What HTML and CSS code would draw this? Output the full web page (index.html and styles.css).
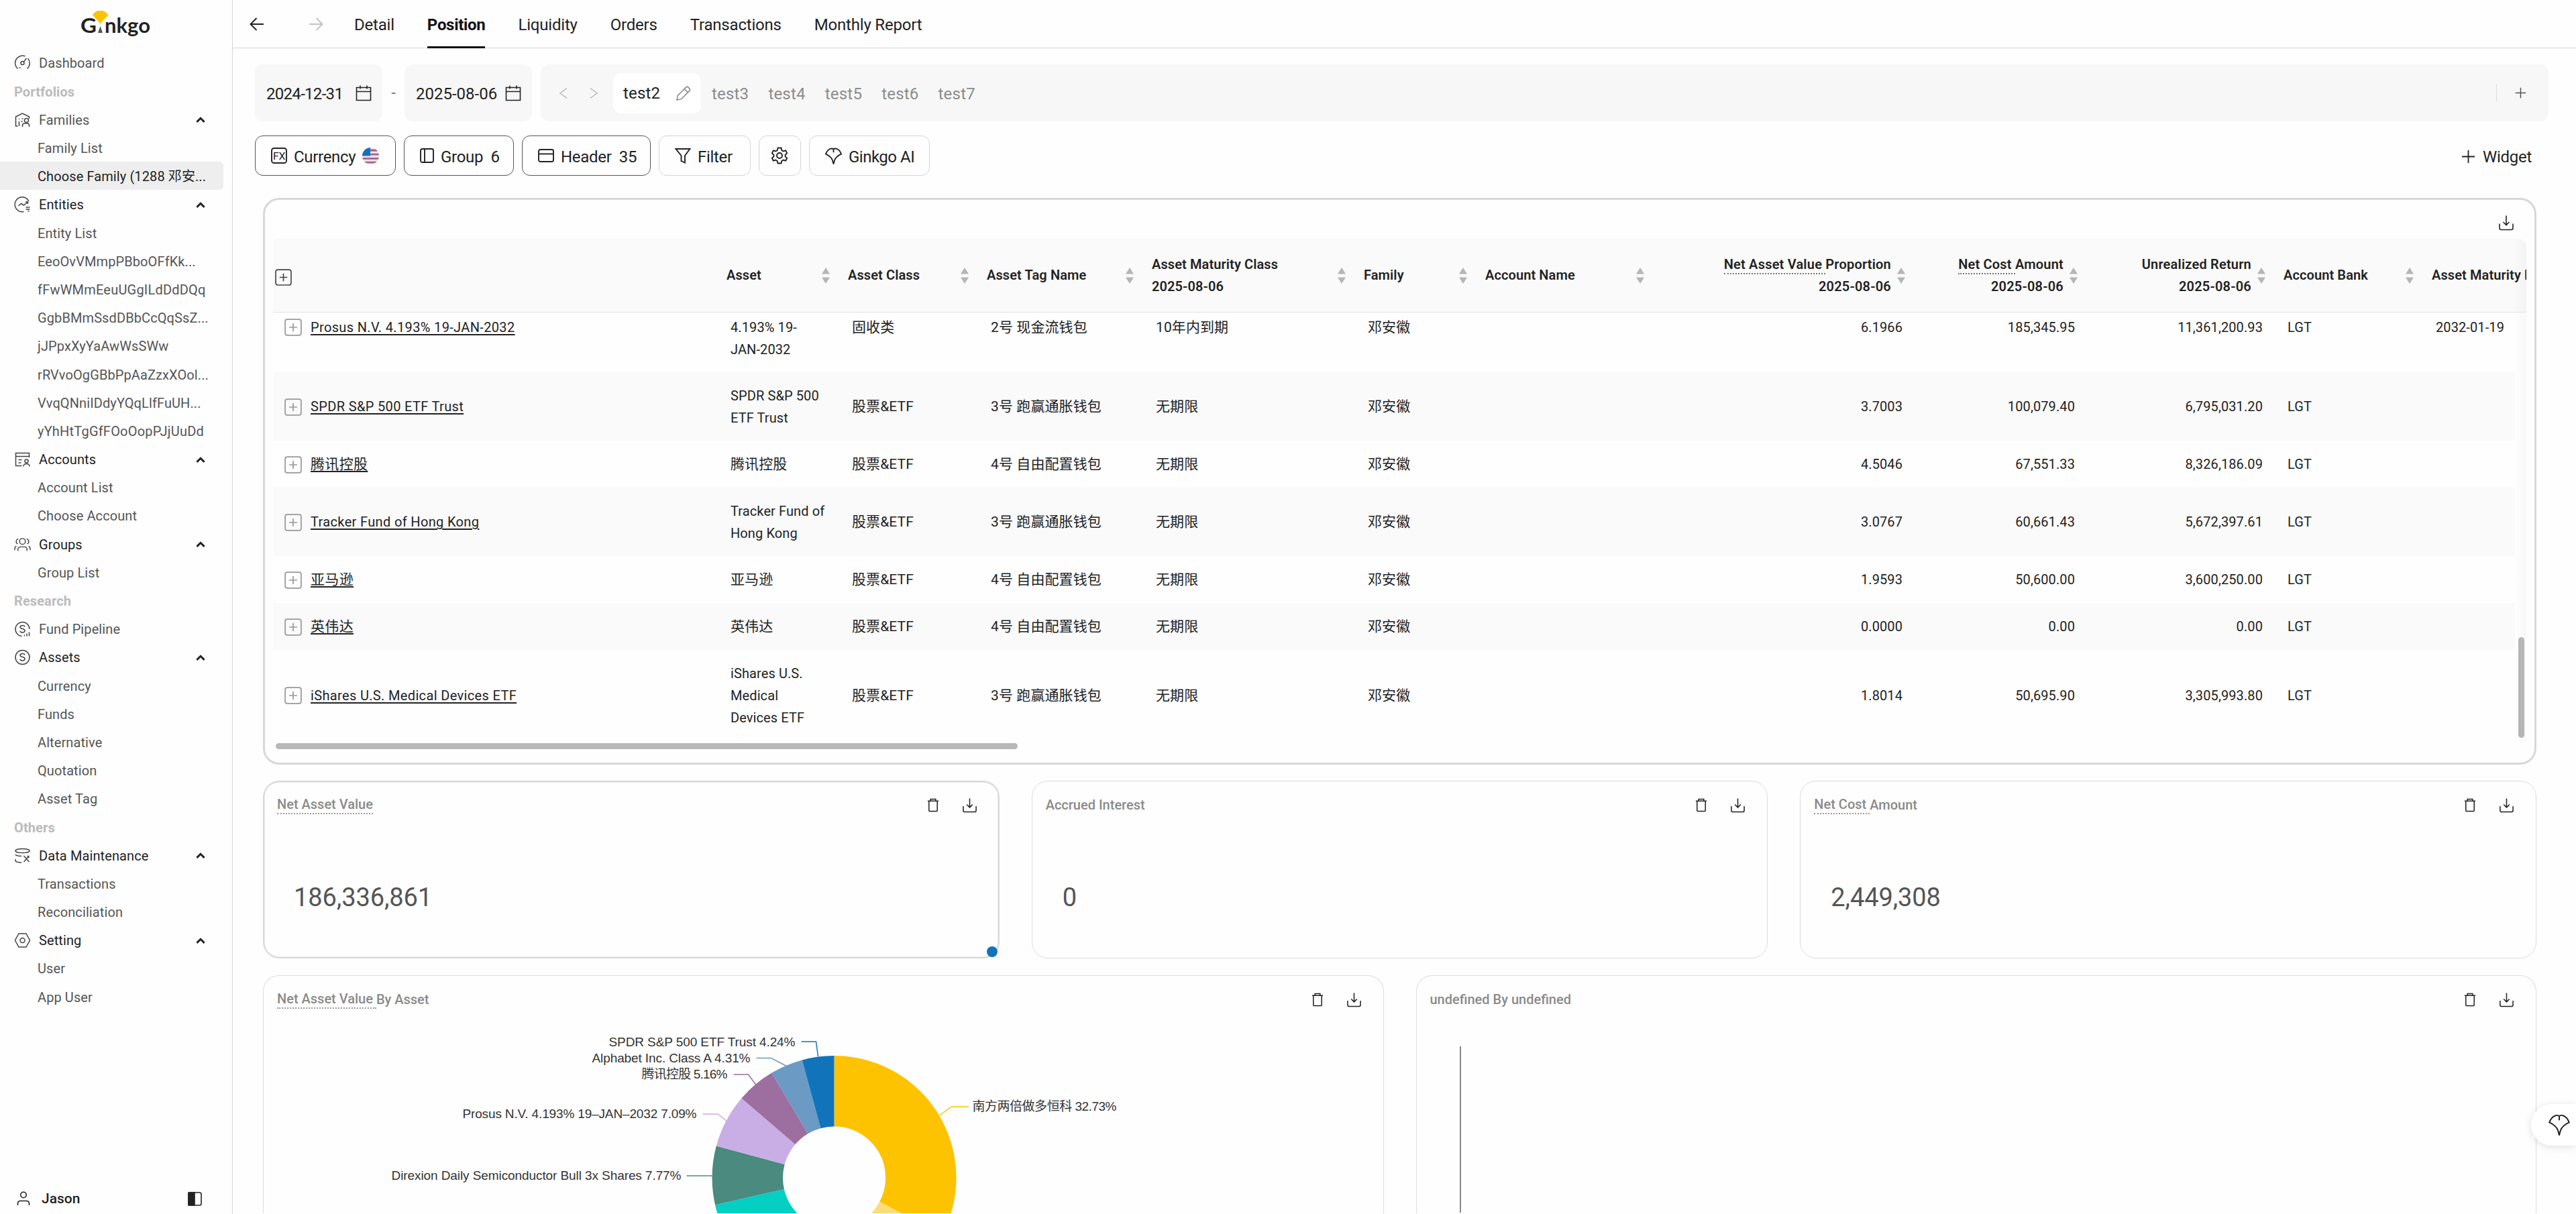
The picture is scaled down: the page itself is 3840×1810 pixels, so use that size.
FILE: index.html
```
<!DOCTYPE html>
<html lang="en">
<head>
    <meta charset="UTF-8">
    <title>Ginkgo - Position</title>
    <link rel="stylesheet" href="styles.css">
</head>
<body>

<!-- icons -->
<svg class="sprite">
    <symbol id="i-plusbox" viewBox="0 0 24 24"><rect x="1" y="1" width="22" height="22" rx="3"/><path d="M12 6.500v11M6.500 12h11"/></symbol>
    <symbol id="i-up" viewBox="0 0 12 8"><path d="M1 7l5-5 5 5" stroke-width="2.600"/></symbol>
    <symbol id="i-sort" viewBox="0 0 12 28"><path d="M6 2l6 9.500h-12zM6 26l6-9.500h-12z" stroke="none" fill="#b5b5b5"/></symbol>
    <symbol id="i-down" viewBox="0 0 24 24"><path d="M12 1.500v14M7.500 11l4.500 4.500 4.500-4.500M2 13.500v6.500q0 2.500 2.500 2.500h15q2.500 0 2.500-2.500v-6.500"/></symbol>
    <symbol id="i-trash" viewBox="0 0 20 22"><path d="M1.500 4.500h17M6 4V1.500h8V4M3.500 4.500v14.500q0 1.500 1.500 1.500h10q1.500 0 1.500-1.500V4.500"/></symbol>
    <symbol id="i-cal" viewBox="0 0 24 24"><path d="M1.500 3.500h21v19h-21zM1.500 9.500h21M7 .5v5M17 .5v5"/></symbol>
    <symbol id="i-leaf" viewBox="0 0 26 26"><path d="M13 25.500l-1.500-5.500Q9.500 14 1 10 3.500 3.500 8.500 1.800q2.500-.8 4.500.7v5-5q2-1.500 4.500-.7Q22.500 3.500 25 10q-8.500 4-10.500 10z"/></symbol>
    <symbol id="i-plus" viewBox="0 0 22 22"><path d="M11 1v20M1 11h20"/></symbol>
</svg>

<div class="layout">
    <div class="sidebar">
        <div class="logo">
            <svg width="104" height="46" viewBox="0 0 104 46">
                <path d="M29.500 22 18 9.500Q21 4 28 2.500L29.500 4 31 2.500Q38 4 41.500 9.500L31 20v3z" fill="#fec300" stroke="none"/>
                <path d="M29.500 26l3.500 10h-7z" fill="#555" stroke="none"/>
                <text x="0" y="36" textLength="24" lengthAdjust="spacingAndGlyphs">G</text>
                <text x="36" y="36" textLength="68" lengthAdjust="spacingAndGlyphs">nkgo</text>
            </svg>
        </div>
        <div class="item">
            <svg class="ico" viewBox="0 0 24 24"><path d="M5 20.500A11 11 0 0 1 16 1.800M20 5a11 11 0 0 1-1 15.500M13.500 10.500L18 5"/><circle cx="12" cy="12" r="2.500"/><path d="M7 19h2"/></svg>
            <span>Dashboard</span>
        </div>
        <div class="caption">Portfolios</div>
        <div class="item">
            <svg class="ico" viewBox="0 0 24 24"><path d="M5 21H2V7l10-5 10 5v3M7 21v-7M7 11v-1M11 10h2M10 14h2"/><circle cx="18" cy="12.500" r="3"/><path d="M12 22v-2q0-3 3-3h4q3 0 3 3v2"/></svg>
            <span>Families</span><svg class="up"><use href="#i-up"/></svg>
        </div>
        <div class="sub">Family List</div>
        <div class="sub active">Choose Family (1288 邓安...</div>
        <div class="item dark">
            <svg class="ico" viewBox="0 0 24 24"><path d="M21.500 7A11 11 0 1 0 14 22.500M6 14l4-3.500 4 2.500 6-5M16.500 8H20v3M17 16h6M17 19h6M20 21l2 1.500"/></svg>
            <span>Entities</span><svg class="up"><use href="#i-up"/></svg>
        </div>
        <div class="sub">Entity List</div>
        <div class="sub">EeoOvVMmpPBboOFfKk...</div>
        <div class="sub wide">fFwWMmEeuUGgILdDdDQq</div>
        <div class="sub">GgbBMmSsdDBbCcQqSsZ...</div>
        <div class="sub">jJPpxXyYaAwWsSWw</div>
        <div class="sub">rRVvoOgGBbPpAaZzxXOol...</div>
        <div class="sub">VvqQNniIDdyYQqLlfFuUH...</div>
        <div class="sub wide">yYhHtTgGfFOoOopPJjUuDd</div>
        <div class="item dark">
            <svg class="ico" viewBox="0 0 24 24"><path d="M11 21.500H2v-19h20V9M2 7.500h20M6 12.500h5M6 17h4"/><circle cx="18" cy="14.500" r="2.500"/><path d="M13.500 22.500q0-4 4.500-4t4.500 4"/></svg>
            <span>Accounts</span><svg class="up"><use href="#i-up"/></svg>
        </div>
        <div class="sub">Account List</div>
        <div class="sub">Choose Account</div>
        <div class="item dark">
            <svg class="ico" viewBox="0 0 26 24"><circle cx="13" cy="7" r="4.500"/><path d="M6 21.500v-2q0-4 4-4h6q4 0 4 4v2M6.500 3q-4 1.500-3 6l2 2M19.500 3q4 1.500 3 6l-2 2M1 20.500v-2q0-3 2.500-4M25 20.500v-2q0-3-2.500-4"/></svg>
            <span>Groups</span><svg class="up"><use href="#i-up"/></svg>
        </div>
        <div class="sub">Group List</div>
        <div class="caption">Research</div>
        <div class="item">
            <svg class="ico" viewBox="0 0 24 24"><path d="M22.500 12A10.500 10.500 0 1 0 11 22.500M15 22.500v-2M18.500 22.500v-4M22 22.500v-6"/><path d="M15.500 8.500Q15 6.500 12 6.500t-3.500 2.200Q8.500 11 12 11.500t3.500 2.800Q15.500 17 12 17t-3.500-2.200"/></svg>
            <span>Fund Pipeline</span>
        </div>
        <div class="item dark">
            <svg class="ico" viewBox="0 0 24 24"><circle cx="12" cy="12" r="10.500"/><path d="M15.500 8.500Q15 6.500 12 6.500t-3.500 2.200Q8.500 11 12 11.500t3.500 2.800Q15.500 17 12 17t-3.500-2.200"/></svg>
            <span>Assets</span><svg class="up"><use href="#i-up"/></svg>
        </div>
        <div class="sub">Currency</div>
        <div class="sub">Funds</div>
        <div class="sub">Alternative</div>
        <div class="sub">Quotation</div>
        <div class="sub">Asset Tag</div>
        <div class="caption">Others</div>
        <div class="item dark">
            <svg class="ico" viewBox="0 0 24 24"><ellipse cx="12" cy="4.500" rx="10.500" ry="3"/><path d="M1.500 10q2 2.500 9 2.500M1.500 17v2.500q2 2.500 9 2.500M14 12l8 9M14 21l8-9M19 12l3 3"/></svg>
            <span>Data Maintenance</span><svg class="up"><use href="#i-up"/></svg>
        </div>
        <div class="sub">Transactions</div>
        <div class="sub">Reconciliation</div>
        <div class="item dark">
            <svg class="ico" viewBox="0 0 24 24"><path d="M6.500 2h11L23 12l-5.500 10h-11L1 12z"/><circle cx="12" cy="12" r="3.500"/></svg>
            <span>Setting</span><svg class="up"><use href="#i-up"/></svg>
        </div>
        <div class="sub">User</div>
        <div class="sub">App User</div>
        <div class="user">
            <svg width="20" height="22" viewBox="0 0 20 22"><circle cx="10" cy="5.500" r="4.200"/><path d="M1.500 21v-2.500q0-4 4-4h9q4 0 4 4V21"/></svg>
            <span>Jason</span>
            <svg class="fold" width="21" height="21" viewBox="0 0 21 21"><rect x="1" y="1" width="19" height="19" rx="2.500"/><path d="M1 1h9v19H1z" fill="#222"/></svg>
        </div>
    </div>

    <div class="main">
        <div class="topbar">
            <svg class="arrow" viewBox="0 0 24 24"><path d="M22 12H3M11.500 3L2.500 12l9 9"/></svg>
            <svg class="arrow off" viewBox="0 0 24 24"><path d="M2 12h19M12.500 3l9 9-9 9"/></svg>
            <div class="tab">Detail</div>
            <div class="tab on">Position</div>
            <div class="tab">Liquidity</div>
            <div class="tab">Orders</div>
            <div class="tab">Transactions</div>
            <div class="tab">Monthly Report</div>
        </div>

        <div class="datebar">
            <div class="date first"><span>2024-12-31</span><svg width="24" height="24"><use href="#i-cal"/></svg></div>
            <div class="dash">-</div>
            <div class="date"><span>2025-08-06</span><svg width="24" height="24"><use href="#i-cal"/></svg></div>
            <div class="views">
                <svg class="pg" viewBox="0 0 14 18"><path d="M13 1L2 9l11 8"/></svg>
                <svg class="pg" viewBox="0 0 14 18"><path d="M1 1l11 8-11 8"/></svg>
                <div class="view on">test2<svg width="23" height="23" viewBox="0 0 24 24"><path d="M2 22l1.500-7L16 2.500q2-2 4 0l1.500 1.500q2 2 0 4L9 20.500zM14 5l4.500 4.500"/></svg></div>
                <div class="view">test3</div>
                <div class="view">test4</div>
                <div class="view">test5</div>
                <div class="view">test6</div>
                <div class="view">test7</div>
                <div class="add"><svg width="17" height="17"><use href="#i-plus"/></svg></div>
            </div>
        </div>

        <div class="tools">
            <div class="btn set currency">
                <svg width="24" height="24" viewBox="0 0 24 24"><rect x="1" y="1" width="22" height="22" rx="3.500"/><text x="3" y="17.500" textLength="18" lengthAdjust="spacingAndGlyphs">FX</text></svg>
                <span>Currency</span>
                <svg class="flag" width="25" height="25" viewBox="0 0 24 24">
                    <clipPath id="round"><circle cx="12" cy="12" r="12"/></clipPath>
                    <g clip-path="url(#round)" stroke="none">
                        <path d="M0 0h24v24H0z" fill="#f3e6dc"/>
                        <path d="M0 2.500h24v3H0zM0 8.500h24v2.500H0zM0 14.500h24v2.500H0zM0 20h24v2.500H0z" fill="#a0659c"/>
                        <path d="M0 0h11.500v12H0z" fill="#1174bb"/>
                    </g>
                </svg>
            </div>
            <div class="btn set group">
                <svg width="21" height="22" viewBox="0 0 21 22"><rect x="1" y="1" width="19" height="20" rx="2.500"/><path d="M7 1v20"/></svg>
                <span>Group&nbsp; 6</span>
            </div>
            <div class="btn set header">
                <svg width="24" height="20" viewBox="0 0 24 20"><rect x="1" y="1" width="22" height="18" rx="2.500"/><path d="M1 7.500h22"/></svg>
                <span>Header&nbsp; 35</span>
            </div>
            <div class="btn filter">
                <svg width="24" height="24" viewBox="0 0 24 24"><path d="M1.500 2h21L15 12v10.500L9.500 20v-8z"/></svg>
                <span>Filter</span>
            </div>
            <div class="btn gear">
                <svg width="24" height="26" viewBox="0 0 24 26"><path d="M9.500 1.500h5l.8 3.600 2.400 1.400 3.500-1.100 2 4-2.600 2.400v2.600l2.600 2.300-2 4-3.500-1.100-2.400 1.400-.8 3.500h-5l-.8-3.500-2.400-1.400-3.500 1.100-2-4 2.600-2.300v-2.600L.8 9.400l2-4 3.500 1.100 2.400-1.400z"/><circle cx="12" cy="13" r="4"/></svg>
            </div>
            <div class="btn ai"><svg width="25" height="25"><use href="#i-leaf"/></svg><span>Ginkgo AI</span></div>
            <div class="widget"><svg width="21" height="21"><use href="#i-plus"/></svg><span>Widget</span></div>
        </div>

        <div class="card table-card">
            <div class="table-tools"><svg width="24" height="24"><use href="#i-down"/></svg></div>
            <div class="thead row">
                <div class="c0"><svg width="25" height="25"><use href="#i-plusbox"/></svg></div>
                <div>Asset<svg class="sort"><use href="#i-sort"/></svg></div>
                <div>Asset Class<svg class="sort"><use href="#i-sort"/></svg></div>
                <div>Asset Tag Name<svg class="sort"><use href="#i-sort"/></svg></div>
                <div><p>Asset Maturity Class<br>2025-08-06</p><svg class="sort"><use href="#i-sort"/></svg></div>
                <div>Family<svg class="sort"><use href="#i-sort"/></svg></div>
                <div>Account Name<svg class="sort"><use href="#i-sort"/></svg></div>
                <div class="num"><p><u>Net Asset Value </u>Proportion<br>2025-08-06</p><svg class="sort"><use href="#i-sort"/></svg></div>
                <div class="num"><p><u>Net Cost </u>Amount<br>2025-08-06</p><svg class="sort"><use href="#i-sort"/></svg></div>
                <div class="num"><p>Unrealized Return<br>2025-08-06</p><svg class="sort"><use href="#i-sort"/></svg></div>
                <div>Account Bank<svg class="sort"><use href="#i-sort"/></svg></div>
                <div>Asset Maturity Date</div>
            </div>
            <div class="tscroll">
                <div class="tbody">
                    <div class="row h3 scrolled">
                        <div class="c0"><svg><use href="#i-plusbox"/></svg><a>Prosus N.V. 4.193% 19-JAN-2032</a></div>
                        <div><br>4.193% 19-<br>JAN-2032</div><div>固收类</div><div>2号 现金流钱包</div><div>10年内到期</div><div>邓安徽</div><div></div>
                        <div class="num">6.1966</div><div class="num">185,345.95</div><div class="num">11,361,200.93</div><div>LGT</div><div>2032-01-19</div>
                    </div>
                    <div class="row h2 odd">
                        <div class="c0"><svg><use href="#i-plusbox"/></svg><a>SPDR S&amp;P 500 ETF Trust</a></div>
                        <div>SPDR S&amp;P 500<br>ETF Trust</div><div>股票&amp;ETF</div><div>3号 跑赢通胀钱包</div><div>无期限</div><div>邓安徽</div><div></div>
                        <div class="num">3.7003</div><div class="num">100,079.40</div><div class="num">6,795,031.20</div><div>LGT</div><div></div>
                    </div>
                    <div class="row">
                        <div class="c0"><svg><use href="#i-plusbox"/></svg><a class="zh">腾讯控股</a></div>
                        <div class="zh">腾讯控股</div><div>股票&amp;ETF</div><div>4号 自由配置钱包</div><div>无期限</div><div>邓安徽</div><div></div>
                        <div class="num">4.5046</div><div class="num">67,551.33</div><div class="num">8,326,186.09</div><div>LGT</div><div></div>
                    </div>
                    <div class="row h2 odd">
                        <div class="c0"><svg><use href="#i-plusbox"/></svg><a>Tracker Fund of Hong Kong</a></div>
                        <div>Tracker Fund of<br>Hong Kong</div><div>股票&amp;ETF</div><div>3号 跑赢通胀钱包</div><div>无期限</div><div>邓安徽</div><div></div>
                        <div class="num">3.0767</div><div class="num">60,661.43</div><div class="num">5,672,397.61</div><div>LGT</div><div></div>
                    </div>
                    <div class="row">
                        <div class="c0"><svg><use href="#i-plusbox"/></svg><a class="zh">亚马逊</a></div>
                        <div class="zh">亚马逊</div><div>股票&amp;ETF</div><div>4号 自由配置钱包</div><div>无期限</div><div>邓安徽</div><div></div>
                        <div class="num">1.9593</div><div class="num">50,600.00</div><div class="num">3,600,250.00</div><div>LGT</div><div></div>
                    </div>
                    <div class="row odd">
                        <div class="c0"><svg><use href="#i-plusbox"/></svg><a class="zh">英伟达</a></div>
                        <div class="zh">英伟达</div><div>股票&amp;ETF</div><div>4号 自由配置钱包</div><div>无期限</div><div>邓安徽</div><div></div>
                        <div class="num">0.0000</div><div class="num">0.00</div><div class="num">0.00</div><div>LGT</div><div></div>
                    </div>
                    <div class="row h3">
                        <div class="c0"><svg><use href="#i-plusbox"/></svg><a>iShares U.S. Medical Devices ETF</a></div>
                        <div>iShares U.S.<br>Medical<br>Devices ETF</div><div>股票&amp;ETF</div><div>3号 跑赢通胀钱包</div><div>无期限</div><div>邓安徽</div><div></div>
                        <div class="num">1.8014</div><div class="num">50,695.90</div><div class="num">3,305,993.80</div><div>LGT</div><div></div>
                    </div>
                </div>
                <div class="vbar"><i></i></div>
            </div>
            <div class="hbar"></div>
        </div>

        <div class="stats">
            <div class="card stat hover">
                <div class="title"><u>Net Asset Value</u><span></span><svg width="20" height="21"><use href="#i-trash"/></svg><svg width="23" height="23"><use href="#i-down"/></svg></div>
                <div class="value">186,336,861</div>
                <i class="resize"></i>
            </div>
            <div class="card stat">
                <div class="title">Accrued Interest<span></span><svg width="20" height="21"><use href="#i-trash"/></svg><svg width="23" height="23"><use href="#i-down"/></svg></div>
                <div class="value">0</div>
            </div>
            <div class="card stat">
                <div class="title"><u>Net Cost&nbsp;</u>Amount<span></span><svg width="20" height="21"><use href="#i-trash"/></svg><svg width="23" height="23"><use href="#i-down"/></svg></div>
                <div class="value">2,449,308</div>
            </div>
        </div>

        <div class="charts">
            <div class="card chart">
                <div class="title"><u>Net Asset Value&nbsp;</u>By Asset<span></span><svg width="20" height="21"><use href="#i-trash"/></svg><svg width="23" height="23"><use href="#i-down"/></svg></div>
                <svg class="pie" width="1665" height="287" viewBox="392.500 1521 1665 287">
                    <!-- ring slices, lengths in percent -->
                    <g transform="rotate(-90 1243 1754)" stroke-width="105.500">
                        <circle cx="1243" cy="1754" r="129.250" pathLength="100" stroke="#fec300" stroke-dasharray="32.730 67.270"/>
                        <circle cx="1243" cy="1754" r="129.250" pathLength="100" stroke="#ffdc7a" stroke-dasharray="22.270 77.730" stroke-dashoffset="-32.730"/>
                        <circle cx="1243" cy="1754" r="129.250" pathLength="100" stroke="#04cfc3" stroke-dasharray="16.430 83.570" stroke-dashoffset="-55"/>
                        <circle cx="1243" cy="1754" r="129.250" pathLength="100" stroke="#4a8a7f" stroke-dasharray="7.770 92.230" stroke-dashoffset="-71.430"/>
                        <circle cx="1243" cy="1754" r="129.250" pathLength="100" stroke="#c9aee5" stroke-dasharray="7.090 92.910" stroke-dashoffset="-79.200"/>
                        <circle cx="1243" cy="1754" r="129.250" pathLength="100" stroke="#9d6fa0" stroke-dasharray="5.160 94.840" stroke-dashoffset="-86.290"/>
                        <circle cx="1243" cy="1754" r="129.250" pathLength="100" stroke="#6b9ac4" stroke-dasharray="4.310 95.690" stroke-dashoffset="-91.450"/>
                        <circle cx="1243" cy="1754" r="129.250" pathLength="100" stroke="#1174bb" stroke-dasharray="4.240 95.760" stroke-dashoffset="-95.760"/>
                    </g>
                    <g stroke-width="1.500">
                        <path d="M1194 1551h22l3 22" stroke="#1174bb"/>
                        <path d="M1127 1575.500h22l23 12" stroke="#6b9ac4"/>
                        <path d="M1093 1600h22l11 15" stroke="#9d6fa0"/>
                        <path d="M1047 1659h23l12 10" stroke="#c9aee5"/>
                        <path d="M1023 1751h38" stroke="#4a8a7f"/>
                        <path d="M1400 1661l18-13h25" stroke="#fec300"/>
                    </g>
                    <g class="labels">
                        <text x="907" y="1558" textLength="278">SPDR S&amp;P 500 ETF Trust 4.24%</text>
                        <text x="882" y="1582" textLength="236">Alphabet Inc. Class A 4.31%</text>
                        <text x="956" y="1606" textLength="128">腾讯控股 5.16%</text>
                        <text x="689" y="1665" textLength="349">Prosus N.V. 4.193% 19–JAN–2032 7.09%</text>
                        <text x="583" y="1757" textLength="432">Direxion Daily Semiconductor Bull 3x Shares 7.77%</text>
                        <text x="1449" y="1654" textLength="215">南方两倍做多恒科 32.73%</text>
                    </g>
                </svg>
            </div>
            <div class="card chart">
                <div class="title">undefined By undefined<span></span><svg width="20" height="21"><use href="#i-trash"/></svg><svg width="23" height="23"><use href="#i-down"/></svg></div>
                <div class="axis"></div>
            </div>
        </div>
    </div>
</div>

<div class="float"><svg width="32" height="32"><use href="#i-leaf"/></svg></div>

</body>
</html>
```
FILE: styles.css
```
*{
    box-sizing: border-box;
}
body{
    margin: 0;
    height: 1810px;
    overflow: hidden;
    background: #fefefe;
    color: #222;
    font-family: Roboto, "Noto Sans CJK SC", sans-serif;
    font-size: 20px;
}
p{
    margin: 0;
}
svg{
    flex: none;
    fill: none;
    stroke: #222;
    stroke-width: 1.6;
}
text{
    stroke: none;
    fill: #222;
}
.sprite{
    display: none;
}
.layout{
    display: flex;
    height: 1810px;
}

/* sidebar */
.sidebar{
    display: flex;
    flex-direction: column;
    flex: none;
    width: 347px;
    height: 1810px;
    border-right: 1px solid #d6d6d6;
    color: #555;
}
.logo{
    flex: none;
    height: 72.4px;
    padding: 13px 0 0 120px;
}
.logo text{
    font-family: Lato, sans-serif;
    font-size: 31px;
    font-weight: 700;
}
.item,.sub,.caption{
    display: flex;
    align-items: center;
    flex: none;
    height: 42.2px;
    padding-top: 2px;
    line-height: 40px;
    white-space: nowrap;
    letter-spacing: .1px;
}
.item{
    padding-right: 40px;
    padding-left: 21px;
    gap: 12px;
}
.item span{
    flex: 1;
}
.dark{
    color: #222;
}
.ico{
    width: 25px;
    height: 24px;
    stroke: #444;
    stroke-width: 1.5;
}
.up{
    width: 14px;
    height: 9px;
}
.sub{
    width: 333px;
    padding-left: 56px;
}
.wide{
    letter-spacing: .2px;
}
.active{
    background: #eee;
    border-radius: 0 6px 6px 0;
    color: #222;
}
.caption{
    padding-left: 21px;
    color: #bbb;
    font-weight: 700;
}
.user{
    display: flex;
    align-items: center;
    height: 42px;
    margin: auto 45px 2px 25px;
    color: #222;
}
.user span{
    flex: 1;
    padding-left: 17px;
    font-size: 21px;
    font-weight: 500;
}

/* top tabs */
.main{
    flex: 1;
    min-width: 0;
}
.topbar{
    display: flex;
    align-items: center;
    height: 72px;
    padding-left: 24px;
    border-bottom: 1px solid #d6d6d6;
    font-size: 24px;
    letter-spacing: -.2px;
}
.arrow{
    width: 24px;
    height: 24px;
    margin-right: 64px;
    stroke-width: 2;
}
.off{
    margin-right: 45px;
    stroke: #c4c4c4;
}
.tab{
    height: 72px;
    margin-right: 49px;
    line-height: 75px;
}
.tab.on{
    border-bottom: 3px solid #111;
    color: #111;
    font-weight: 700;
    letter-spacing: -.3px;
}

/* date range and saved views */
.datebar{
    display: flex;
    height: 85px;
    margin: 24px 41px 0 33px;
    font-size: 24px;
    line-height: 28px;
}
.date{
    display: flex;
    align-items: center;
    justify-content: space-between;
    width: 190px;
    padding: 0 16px 0 17px;
    border-radius: 12px;
    background: #f7f7f7;
}
.date span{
    padding-top: 2px;
}
.first span{
    letter-spacing: -.7px;
}
.dash{
    width: 33px;
    line-height: 85px;
    text-align: center;
    color: #777;
}
.views{
    display: flex;
    align-items: center;
    flex: 1;
    margin-left: 13px;
    padding-left: 27px;
    border-radius: 12px;
    background: #f7f7f7;
    color: #8c8c8c;
    letter-spacing: .2px;
}
.pg{
    width: 13px;
    height: 18px;
    margin-right: 33px;
    stroke: #bbb;
}
.pg + .view{
    margin: 0 0 0 -11px;
}
.view{
    width: 54px;
    margin-left: 30.400px;
    padding-top: 2px;
}
.view.on{
    display: flex;
    align-items: center;
    justify-content: space-between;
    width: 131px;
    height: 60px;
    padding: 1px 15px 0;
    border-radius: 12px;
    background: #fff;
    color: #222;
}
.view.on svg{
    stroke: #888;
}
.view.on + .view{
    margin-left: 16px;
}
.add{
    display: flex;
    align-items: center;
    width: 78px;
    height: 27px;
    margin-left: auto;
    padding-left: 27px;
    border-left: 1px solid #ddd;
}
.add svg{
    stroke: #555;
    stroke-width: 2;
}

/* tool buttons */
.tools{
    display: flex;
    gap: 12px;
    height: 60px;
    margin: 21px 66px 0 33px;
    font-size: 24px;
    line-height: 28px;
    letter-spacing: -.3px;
}
.tools span{
    padding-top: 3px;
}
.btn{
    display: flex;
    align-items: center;
    gap: 10px;
    padding-left: 23px;
    border: 1.5px solid #d4d4d4;
    border-radius: 12px;
    white-space: nowrap;
}
.btn svg,.widget svg{
    stroke-width: 1.9;
}
.btn.set{
    border-color: #555;
}
.currency{
    width: 210px;
}
.currency text{
    font-size: 15px;
}
.group{
    width: 164px;
}
.header{
    width: 192px;
}
.filter{
    width: 137px;
}
.gear{
    width: 63px;
    padding-left: 18px;
}
.ai{
    width: 180px;
    letter-spacing: -.5px;
}
.widget{
    display: flex;
    align-items: center;
    gap: 11px;
    margin-left: auto;
    padding-top: 3px;
}
.widget span{
    padding-top: 1px;
}

/* cards */
.card{
    border: 1.5px solid #dcdcdc;
    border-radius: 24px;
}
.table-card{
    height: 845px;
    margin: 33px 59px 0 45px;
    padding: 0 12px;
    border: 3px solid #d8d8d8;
}
.table-tools{
    display: flex;
    justify-content: flex-end;
    height: 58px;
    padding: 22px 18px 0 0;
}
.row{
    display: grid;
    grid-template-columns: 666px 181px 207px 246px 316px 181px 264px 389px 257px 280px 221px 152px;
    align-items: center;
    height: 70px;
    line-height: 33.300px;
    white-space: nowrap;
}
.row > div{
    padding: 2px 0 0 16px;
    letter-spacing: .1px;
}
.row .num{
    padding: 2px 21px 0 0;
    text-align: right;
}
/* class, tag, maturity and family columns */
.tbody .row > div:nth-child(n+3):nth-child(-n+6),.row .zh{
    font-size: 21px;
}
.h2{
    height: 102px;
}
.h3{
    height: 135px;
}
.odd{
    background: #fafafa;
}
.row .c0{
    display: flex;
    align-items: center;
    gap: 13px;
    padding-left: 17px;
    letter-spacing: .35px;
}
.row .c0 svg{
    width: 26px;
    height: 26px;
    stroke: #999;
}
.row a{
    text-decoration: underline;
    text-decoration-thickness: 1.5px;
    text-underline-offset: 3px;
}
.thead{
    height: 110px;
    overflow: hidden;
    border-bottom: 1px solid #e4e4e4;
    border-radius: 8px 12px 0 0;
    background: linear-gradient(90deg, #fafafa 99.4%, #f3f3f3);
    font-weight: 600;
}
.thead > div,.thead .num{
    display: flex;
    align-items: center;
    justify-content: space-between;
    padding: 1px 17px 0 10px;
}
.thead .num{
    justify-content: flex-end;
    gap: 9px;
    letter-spacing: .2px;
}
.thead .c0{
    padding: 5px 0 0 3px;
}
.thead .c0 svg{
    width: 25px;
    height: 25px;
    stroke: #444;
}
.sort{
    width: 12px;
    height: 28px;
}
u{
    padding-bottom: 1px;
    border-bottom: 2px dotted #777;
    text-decoration: none;
}
.tscroll{
    display: flex;
    height: 639px;
    overflow: hidden;
}
.tbody{
    width: 3342px;
    overflow: hidden;
}
.scrolled{
    margin-top: -46px;
}
.vbar{
    flex: 1;
    padding: 484px 3px 0 5px;
    background: linear-gradient(90deg, #fefefe, #f8f8f8);
}
.vbar i{
    display: block;
    height: 150px;
    border-radius: 5px;
    background: #b5b5b5;
}
.hbar{
    width: 1106px;
    height: 9px;
    margin: 3px 0 0 4px;
    border-radius: 5px;
    background: #b8b8b8;
}
.stats{
    display: grid;
    grid-template-columns: repeat(3, 1fr);
    gap: 48px;
    margin: 24px 59px 0 45px;
}
.stat{
    position: relative;
    height: 265px;
}
.hover{
    border-color: #d8d8d8;
    box-shadow: inset 0 0 0 1.5px #d8d8d8;
}
.title{
    display: flex;
    align-items: center;
    height: 68px;
    padding: 2px 32px 0 20px;
    line-height: 24px;
    color: #8a8a8a;
    font-weight: 500;
}
.title u{
    border-color: #999;
}
.title span{
    flex: 1;
}
.title svg + svg{
    margin-left: 33px;
}
.value{
    padding: 75px 0 0 45px;
    line-height: 60px;
    color: #555;
    font-size: 38px;
    letter-spacing: -.1px;
}
.resize{
    position: absolute;
    right: 2px;
    bottom: 1px;
    width: 16px;
    height: 16px;
    border-radius: 50%;
    background: #1174bb;
}
.charts{
    display: grid;
    grid-template-columns: 1fr 1fr;
    gap: 48px;
    margin: 25px 59px 0 45px;
}
.chart{
    height: 355px;
    overflow: hidden;
    border-bottom: 0;
    border-radius: 24px 24px 0 0;
}
.pie{
    display: block;
}
.labels text{
    fill: #333;
    font-family: "Liberation Sans", "Noto Sans CJK SC", sans-serif;
    font-size: 19px;
}
.axis{
    width: 2px;
    height: 248px;
    margin: 37px 0 0 64px;
    background: #888;
}

/* assistant handle on the right edge */
.float{
    position: fixed;
    top: 1646px;
    right: 0;
    width: 67px;
    height: 62px;
    padding: 15px 0 0 26px;
    border-radius: 31px 0 0 31px;
    background: #fff;
    box-shadow: 0 2px 12px rgba(0,0,0,.12);
}
```
